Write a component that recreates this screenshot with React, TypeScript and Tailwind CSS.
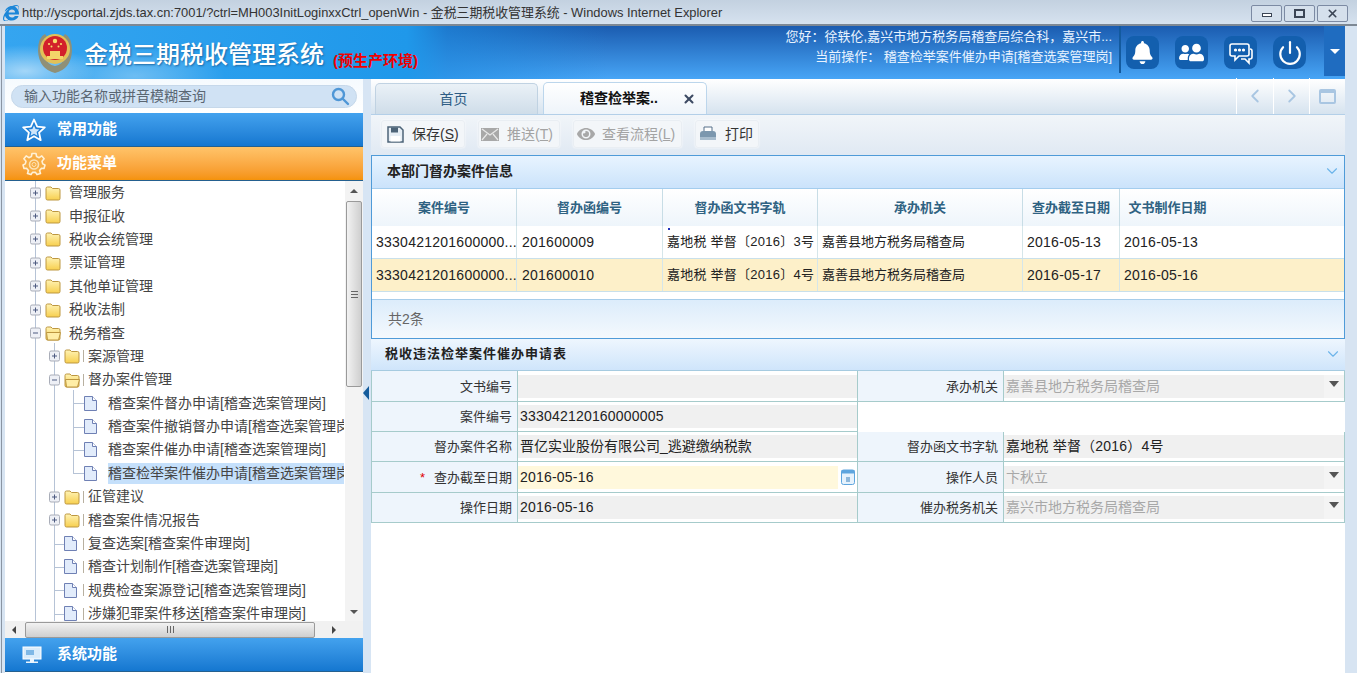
import React from "react";
import { FaBell, FaEye, FaInternetExplorer, FaUserFriends } from "react-icons/fa";
import { ChevronDown, ChevronLeft, ChevronRight, Power, X } from "lucide-react";

type TreeRow = {
  label: string;
  level: number;
  kind: "closed" | "open" | "doc";
  guides: number[];
  elbow?: number;
  halfLine?: number;
  selected?: boolean;
  tick?: boolean;
};

const treeRows: TreeRow[] = [
  { label: "管理服务", level: 0, kind: "closed", guides: [30] },
  { label: "申报征收", level: 0, kind: "closed", guides: [30] },
  { label: "税收会统管理", level: 0, kind: "closed", guides: [30] },
  { label: "票证管理", level: 0, kind: "closed", guides: [30] },
  { label: "其他单证管理", level: 0, kind: "closed", guides: [30] },
  { label: "税收法制", level: 0, kind: "closed", guides: [30] },
  { label: "税务稽查", level: 0, kind: "open", guides: [30] },
  { label: "案源管理", level: 1, kind: "closed", guides: [30, 49], tick: true },
  { label: "督办案件管理", level: 1, kind: "open", guides: [30, 49], tick: true },
  { label: "稽查案件督办申请[稽查选案管理岗]", level: 2, kind: "doc", guides: [30, 49, 68], elbow: 68 },
  { label: "稽查案件撤销督办申请[稽查选案管理岗]", level: 2, kind: "doc", guides: [30, 49, 68], elbow: 68 },
  { label: "稽查案件催办申请[稽查选案管理岗]", level: 2, kind: "doc", guides: [30, 49, 68], elbow: 68 },
  { label: "稽查检举案件催办申请[稽查选案管理岗]", level: 2, kind: "doc", guides: [30, 49], elbow: 68, halfLine: 68, selected: true },
  { label: "征管建议", level: 1, kind: "closed", guides: [30, 49], tick: true },
  { label: "稽查案件情况报告", level: 1, kind: "closed", guides: [30, 49], tick: true },
  { label: "复查选案[稽查案件审理岗]", level: 1, kind: "doc", guides: [30, 49], elbow: 49, tick: true },
  { label: "稽查计划制作[稽查选案管理岗]", level: 1, kind: "doc", guides: [30, 49], elbow: 49, tick: true },
  { label: "规费检查案源登记[稽查选案管理岗]", level: 1, kind: "doc", guides: [30, 49], elbow: 49, tick: true },
  { label: "涉嫌犯罪案件移送[稽查案件审理岗]", level: 1, kind: "doc", guides: [30, 49], elbow: 49, tick: true },
];

const cases = [
  { no: "3330421201600000...", letter: "201600009", doc: "嘉地税 举督〔2016〕3号", org: "嘉善县地方税务局稽查局", end: "2016-05-13", made: "2016-05-13" },
  { no: "3330421201600000...", letter: "201600010", doc: "嘉地税 举督〔2016〕4号", org: "嘉善县地方税务局稽查局", end: "2016-05-17", made: "2016-05-16" },
];

const Folder = ({ open }: { open: boolean }) => (
  <svg width="16" height="16" viewBox="0 0 16 16" className="shrink-0">
    <defs>
      <linearGradient id="folderFill" x1="0" y1="0" x2="0" y2="1">
        <stop offset="0" stopColor="#fff3b5" />
        <stop offset="1" stopColor="#f7cf4e" />
      </linearGradient>
    </defs>
    <path d="M1 3.5 Q1 2 2.5 2 H6 L7.5 3.5 H13.5 Q15 3.5 15 5 V13.5 Q15 15 13.5 15 H2.5 Q1 15 1 13.5 Z" fill="url(#folderFill)" stroke="#bd9740" />
    {open && <path d="M1.5 7.5 H15.5 L13.5 15 H2.5 Z" fill="#ffeea6" stroke="#bd9740" />}
  </svg>
);

const Doc = () => (
  <svg width="13" height="15" viewBox="0 0 13 15" className="shrink-0">
    <path d="M.5.5 H8.5 L12.5 4.5 V14.5 H.5 Z" fill="#e2ecfb" stroke="#6f80b4" />
    <path d="M8.5.5 V4.5 H12.5" fill="#fff" stroke="#6f80b4" />
  </svg>
);

const Gutter = ({ row }: { row: TreeRow }) => {
  const width = row.kind === "doc" ? (row.level === 2 ? 79 : 59) : row.level === 0 ? 40 : 59;
  const boxX = 30 + row.level * 19;
  return (
    <svg width={width} height="24" className="shrink-0 overflow-visible">
      {row.guides.map((x) => (
        <line key={x} x1={x + 0.5} x2={x + 0.5} y1="-1" y2="25" stroke="#b6c3d6" />
      ))}
      {row.halfLine && <line x1={row.halfLine + 0.5} x2={row.halfLine + 0.5} y1="-1" y2="12.5" stroke="#b6c3d6" />}
      {row.elbow && <line x1={row.elbow} x2={row.elbow + 11} y1="12.5" y2="12.5" stroke="#b6c3d6" />}
      {row.kind !== "doc" && (
        <g>
          <rect x={boxX - 4.5} y="7" width="10" height="10" rx="1.5" fill="#eef0f6" stroke="#a9adb8" />
          <line x1={boxX - 2} x2={boxX + 3} y1="12" y2="12" stroke="#4d5a80" />
          {row.kind === "closed" && <line x1={boxX + 0.5} x2={boxX + 0.5} y1="9.5" y2="14.5" stroke="#4d5a80" />}
        </g>
      )}
    </svg>
  );
};

const Tree = ({ row }: { row: TreeRow }) => (
  <div className="flex h-[23.4px] items-center whitespace-nowrap text-[14px] text-[#444]">
    <Gutter row={row} />
    {row.kind === "doc" ? <Doc /> : <Folder open={row.kind === "open"} />}
    {row.level === 0 && <span className="w-[8px] shrink-0" />}
    {row.tick && (
      <span className={`${row.kind === "doc" ? "ml-[6px]" : "ml-[3px]"} mr-[4px] h-[12px] w-px shrink-0 bg-[#b8b0a0]`} />
    )}
    {row.level === 2 && <span className="w-[11px] shrink-0" />}
    <span className={row.selected ? "flex-1 bg-[#c5e0fb]" : ""}>{row.label}</span>
  </div>
);

const Menu = ({ icon, label, orange }: { icon: React.ReactNode; label: string; orange?: boolean }) => (
  <div
    className={`flex h-[34px] shrink-0 items-center border-b border-[#24608f] pl-[17px] text-[15px] font-bold text-white ${
      orange ? "bg-gradient-to-b from-[#ffc469] to-[#f59208]" : "bg-gradient-to-b from-[#43a2ee] to-[#1477d0]"
    }`}
  >
    <span className="flex w-[35px] justify-start">{icon}</span>
    {label}
  </div>
);

const HeaderIcon = ({ children, className }: { children: React.ReactNode; className?: string }) => (
  <div className={`flex h-[33px] w-[33px] items-center justify-center rounded-[8px] bg-[#135fae] text-white ${className ?? ""}`}>
    {children}
  </div>
);

const ToolButton = ({ icon, children, disabled, className }: { icon: React.ReactNode; children: React.ReactNode; disabled?: boolean; className: string }) => (
  <div
    className={`flex h-[28px] items-center rounded-[3px] border border-[#e9eef3] bg-[#f3f6f9] text-[14px] shadow-[0_0_2px_#ffffff] ${
      disabled ? "text-[#a3a3a3]" : "text-[#333]"
    } ${className}`}
  >
    {icon}
    {children}
  </div>
);

const PanelChevron = () => <ChevronDown size={18} strokeWidth={1.5} className="text-[#6cb4ea]" />;

const Grip = ({ vertical }: { vertical?: boolean }) => (
  <span className={`flex ${vertical ? "flex-col" : ""} gap-[2px]`}>
    <span className={`${vertical ? "h-px w-[7px]" : "h-[7px] w-px"} bg-[#666]`} />
    <span className={`${vertical ? "h-px w-[7px]" : "h-[7px] w-px"} bg-[#666]`} />
    <span className={`${vertical ? "h-px w-[7px]" : "h-[7px] w-px"} bg-[#666]`} />
  </span>
);

const Label = ({ children }: { children: React.ReactNode }) => (
  <div className="flex items-center justify-end border-r border-b border-[#a6cbcb] bg-[#eef5fc] pr-[5px] pt-px text-[13px] text-[#333]">
    {children}
  </div>
);

const Field = ({ children }: { children?: React.ReactNode }) => (
  <div className="flex items-center border-r border-b border-[#a6cbcb] bg-white">
    <div className="flex h-[23px] w-full items-center bg-[#f0f0f0] pl-[2px] text-[14px] tracking-[0.2px] text-[#222]">{children}</div>
  </div>
);

const SelectField = ({ children }: { children: React.ReactNode }) => (
  <div className="flex items-center border-r border-b border-[#a6cbcb] bg-white">
    <div className="flex h-[23px] flex-1 items-center bg-[#f0f0f0] pl-[2px] text-[14px] text-[#a8a8a8]">{children}</div>
    <div className="flex h-[23px] w-[20px] items-start justify-center bg-[#f4f4f4] pt-[6px]">
      <span className="h-0 w-0 border-x-[5px] border-t-[6px] border-x-transparent border-t-[#555]" />
    </div>
  </div>
);

export default function App() {
  return (
    <div className="flex h-[673px] w-[1357px] flex-col overflow-hidden bg-[#d7e4f2] font-['Liberation_Sans','Noto_Sans_CJK_SC',sans-serif]">
      {/* ie title bar */}
      <div className="flex h-[26px] shrink-0 items-center border-b-2 border-[#7d8894] bg-gradient-to-b from-[#c3d1e0] to-[#d6e2ef] pl-[3px] pr-[9px] pt-[2px]">
        <FaInternetExplorer size={16} className="mr-[3px] text-[#1b86d8]" />
        <span className="text-[12.9px] text-[#333]">
          http://yscportal.zjds.tax.cn:7001/?ctrl=MH003InitLoginxxCtrl_openWin - 金税三期税收管理系统 - Windows Internet Explorer
        </span>
        <div className="ml-auto flex gap-[2px]">
          <div className="flex h-[17px] w-[31px] items-center justify-center rounded-[2px] border border-[#7c8aa3] bg-[#d5e0ec]">
            <span className="mt-[3px] h-[4px] w-[10px] border border-[#3b4555] bg-white" />
          </div>
          <div className="flex h-[17px] w-[31px] items-center justify-center rounded-[2px] border border-[#7c8aa3] bg-[#d5e0ec]">
            <span className="h-[9px] w-[11px] border-2 border-[#3b4555]" />
          </div>
          <div className="flex h-[17px] w-[31px] items-center justify-center rounded-[2px] border border-[#7c8aa3] bg-[#d5e0ec]">
            <X size={13} strokeWidth={3} className="text-[#3b4555]" />
          </div>
        </div>
      </div>

      <div className="ml-px flex min-h-0 flex-1 flex-col border-l border-[#8a95a3] pl-[3px] pr-[12px]">
        {/* blue system header */}
        <div className="flex h-[53px] shrink-0 items-center bg-[radial-gradient(ellipse_70px_26px_at_20px_45px,rgba(255,255,255,0.55),transparent),radial-gradient(ellipse_90px_30px_at_130px_50px,rgba(255,255,255,0.3),transparent),linear-gradient(90deg,#35a5f0_0%,#1f98ea_30%,rgba(30,140,225,0.6)_33%,transparent_45%),linear-gradient(180deg,#1b5cb0,#47a5f6)]">
          <svg width="36" height="43" viewBox="0 0 36 43" className="ml-[32px] shrink-0">
            <path d="M18 42 Q2 38 1 20 Q1 6 8 3 L12 8 Q5 14 7 24 Q10 34 18 35 Q26 34 29 24 Q31 14 24 8 L28 3 Q35 6 35 20 Q34 38 18 42 Z" fill="#8f9078" />
            <circle cx="18" cy="18" r="15" fill="#e2c159" />
            <circle cx="18" cy="17" r="12" fill="#d3212b" />
            <path d="M10 25 H26 V28 H10 Z M13 20 H23 V25 H13 Z" fill="#f4d469" />
            <circle cx="18" cy="10" r="2.2" fill="#f8dc6c" />
            <circle cx="12" cy="13" r="1.1" fill="#f8dc6c" />
            <circle cx="24" cy="13" r="1.1" fill="#f8dc6c" />
            <circle cx="14.5" cy="15.5" r="1" fill="#f8dc6c" />
            <circle cx="21.5" cy="15.5" r="1" fill="#f8dc6c" />
          </svg>
          <span className="ml-[11px] mt-[5px] whitespace-nowrap text-[24px] font-medium leading-none text-white [text-shadow:1px_1px_2px_#1c6aa8]">金税三期税收管理系统</span>
          <span className="ml-[9px] mt-[15px] whitespace-nowrap text-[15px] font-bold leading-none text-[#f00000]">(预生产环境)</span>
          <div className="ml-auto flex h-[47px] flex-col items-end gap-[3px] self-start border-r-2 border-[#135a9e] pr-[7px] text-[13px] leading-[17px] text-[#e8f3ff]">
            <span className="mt-[2px]">您好：徐轶伦,嘉兴市地方税务局稽查局综合科，嘉兴市...</span>
            <span>当前操作： 稽查检举案件催办申请[稽查选案管理岗]</span>
          </div>
          <div className="ml-[5px] flex items-center gap-[16px]">
            <HeaderIcon><FaBell size={23} /></HeaderIcon>
            <HeaderIcon><FaUserFriends size={25} className="-scale-x-100" /></HeaderIcon>
            <HeaderIcon>
              <svg width="24" height="24" viewBox="0 0 24 24" fill="none" stroke="white" strokeWidth="1.6">
                <path d="M3 3 H18 Q20 3 20 5 V13 Q20 15 18 15 H10 L6 19 V15 H3 Q1 15 1 13 V5 Q1 3 3 3 Z" />
                <path d="M21 8 Q23 8 23 10 V16 Q23 18 21 18 H20 V22 L16 18 H12" />
                <circle cx="6.5" cy="9" r=".8" fill="white" />
                <circle cx="10.5" cy="9" r=".8" fill="white" />
                <circle cx="14.5" cy="9" r=".8" fill="white" />
              </svg>
            </HeaderIcon>
            <HeaderIcon className="!rounded-[10px]"><Power size={26} strokeWidth={2} /></HeaderIcon>
          </div>
          <div className="ml-[18px] flex h-[50px] w-[21px] items-center justify-center self-start bg-[#1f6cc0]">
            <span className="h-0 w-0 border-x-[5px] border-t-[5px] border-x-transparent border-t-white" />
          </div>
        </div>

        <div className="flex min-h-0 flex-1">
          {/* left sidebar */}
          <div className="flex w-[358px] shrink-0 flex-col bg-white">
            <div className="flex h-[34px] shrink-0 items-center bg-gradient-to-b from-[#f5fafe] to-white px-[6px]">
              <div className="flex h-[23px] w-full items-center justify-between rounded-full border border-[#c6d8ea] bg-[#d0e2f4] pl-[12px] pr-[6px] text-[14px] text-[#5a6672]">
                输入功能名称或拼音模糊查询
                <svg width="19" height="19" viewBox="0 0 19 19" fill="none" stroke="#4f97d6" strokeWidth="2.4">
                  <circle cx="7.5" cy="7.5" r="5.5" />
                  <path d="M12 12 L17 17" strokeLinecap="round" />
                </svg>
              </div>
            </div>
            <Menu
              label="常用功能"
              icon={
                <svg width="24" height="24" viewBox="0 0 24 24">
                  <path d="M12 1.5 L15.2 8.6 L22.8 9.4 L17.1 14.6 L18.7 22.2 L12 18.3 L5.3 22.2 L6.9 14.6 L1.2 9.4 L8.8 8.6 Z" fill="#1f7fd6" stroke="#ffffff" strokeWidth="1.8" strokeLinejoin="round" />
                  <path d="M12 7.5 L13.6 11 L17.4 11.4 L14.6 14 L15.4 17.7 L12 15.8 L8.6 17.7 L9.4 14 L6.6 11.4 L10.4 11 Z" fill="#cfe6fa" />
                </svg>
              }
            />
            <Menu
              label="功能菜单"
              orange
              icon={
                <svg width="24" height="24" viewBox="0 0 24 24" fill="none" stroke="#fff1d6" strokeWidth="1.6" strokeLinejoin="round">
                  <path d="M10 1.5 H14 L14.6 4.6 L17.2 5.7 L19.8 3.9 L22.1 6.8 L20 9.2 L20.7 11.9 L23 13 L22 16.5 L19.3 16.4 L17.6 18.6 L18.5 21.5 L15 22.6 L13.5 20.4 H10.5 L9 22.6 L5.5 21.5 L6.4 18.6 L4.7 16.4 L2 16.5 L1 13 L3.3 11.9 L4 9.2 L1.9 6.8 L4.2 3.9 L6.8 5.7 L9.4 4.6 Z" fill="#f7ad45" />
                  <circle cx="12" cy="12.5" r="4.5" stroke="#fde2b5" />
                  <circle cx="12" cy="12.5" r="2" stroke="#fde2b5" strokeWidth="1" />
                </svg>
              }
            />
            <div className="flex h-[440px] shrink-0">
              <div className="min-w-0 flex-1 overflow-hidden border-r border-white">
                {treeRows.map((row) => (
                  <Tree key={row.label} row={row} />
                ))}
              </div>
              <div className="flex w-[18px] shrink-0 flex-col items-center bg-[#f3f3f3]">
                <span className="mt-[8px] h-0 w-0 border-x-[4px] border-b-[4px] border-x-transparent border-b-[#555]" />
                <div className="mt-[8px] flex h-[186px] w-[16px] items-center justify-center rounded-[2px] border border-[#9a9a9a] bg-gradient-to-r from-[#f2f2f2] to-[#cfcfcf]">
                  <Grip vertical />
                </div>
                <span className="mt-auto mb-[7px] h-0 w-0 border-x-[4px] border-t-[4px] border-x-transparent border-t-[#555]" />
              </div>
            </div>
            <div className="flex h-[17px] shrink-0 items-center bg-[#f1f1f1]">
              <span className="ml-[7px] h-0 w-0 border-y-[4px] border-r-[4px] border-y-transparent border-r-[#444]" />
              <div className="ml-[9px] flex h-[16px] w-[290px] items-center justify-center rounded-[2px] border border-[#9a9a9a] bg-gradient-to-b from-[#f2f2f2] to-[#cfcfcf]">
                <Grip />
              </div>
              <span className="ml-[17px] h-0 w-0 border-y-[4px] border-l-[4px] border-y-transparent border-l-[#444]" />
            </div>
            <Menu
              label="系统功能"
              icon={
                <svg width="20" height="18" viewBox="0 0 20 18">
                  <rect x="1" y="1" width="18" height="12" fill="#d9ecfb" stroke="#fff" />
                  <path d="M4 17 H16 V15.5 H12 V13 H8 V15.5 H4 Z" fill="#e9f4fd" />
                  <rect x="4" y="4" width="8" height="5" fill="#7fb8e6" />
                </svg>
              }
            />
          </div>

          {/* collapse handle */}
          <div className="flex w-[8px] shrink-0 flex-col bg-[#d7e5f4] pt-[307px]">
            <span className="h-0 w-0 border-y-[7px] border-r-[6px] border-y-transparent border-r-[#155c9c]" />
          </div>

          {/* right content */}
          <div className="flex min-w-0 flex-1 flex-col bg-white">
            <div className="flex h-[36px] shrink-0 items-end border-b border-[#b3cfe8] bg-gradient-to-b from-white to-[#d6e3ef] pl-[4px]">
              <div className="flex h-[31px] w-[163px] items-center justify-center rounded-t-[5px] border border-b-0 border-[#c0d2e2] bg-gradient-to-b from-[#eaf1f7] to-[#cfdde9] pr-[6px] pt-px text-[14px] text-[#2f5d85]">
                首页
              </div>
              <div className="ml-[5px] flex h-[32px] w-[164px] items-center rounded-t-[5px] border border-b-0 border-[#bcd6ec] bg-gradient-to-b from-white to-[#eef4fa] pl-[36px] text-[14px] font-bold text-[#111]">
                稽查检举案..
                <X size={14} strokeWidth={3.5} className="ml-auto mr-[10px] text-[#3d4a63]" />
              </div>
              <div className="ml-auto flex h-[36px] text-[#a9c6e2]">
                <div className="flex w-[37px] items-center justify-center border-l border-white"><ChevronLeft size={22} /></div>
                <div className="flex w-[36px] items-center justify-center border-l border-white"><ChevronRight size={22} /></div>
                <div className="flex w-[36px] items-center justify-center border-l border-white">
                  <span className="h-[15px] w-[17px] rounded-[2px] border-2 border-t-[4px] border-[#a9c6e2]" />
                </div>
              </div>
            </div>

            <div className="flex h-[40px] shrink-0 items-start gap-[13px] bg-gradient-to-b from-[#f1f5f9] to-[#e0e9f3] pl-[10px] pt-[5px]">
              <ToolButton
                className="w-[84px] pl-[5px]"
                icon={
                  <svg width="17" height="17" viewBox="0 0 17 17" className="mr-[8px]">
                    <path d="M1 1 H13 L16 4 V16 H1 Z" fill="#e6eef5" stroke="#4d6478" strokeWidth="1.5" />
                    <rect x="4" y="1.5" width="7" height="5" fill="#4d6478" />
                    <rect x="3.5" y="10" width="10" height="5.5" fill="#fff" />
                  </svg>
                }
              >
                保存(<span className="underline">S</span>)
              </ToolButton>
              <ToolButton
                disabled
                className="w-[82px] pl-[2px]"
                icon={
                  <svg width="18" height="13" viewBox="0 0 18 13" className="mr-[8px]">
                    <rect width="18" height="13" fill="#a8a8a8" />
                    <path d="M1 1 L9 7 L17 1 M1 12 L6 6 M17 12 L12 6" fill="none" stroke="#e8e8e8" strokeWidth="1.2" />
                  </svg>
                }
              >
                推送(<span className="underline">T</span>)
              </ToolButton>
              <ToolButton
                disabled
                className="w-[109px] pl-[3px]"
                icon={<FaEye size={18} className="mr-[7px] text-[#a8a8a8]" />}
              >
                查看流程(<span className="underline">L</span>)
              </ToolButton>
              <ToolButton
                className="w-[64px] pl-[3px]"
                icon={
                  <svg width="18" height="18" viewBox="0 0 18 18" className="mr-[8px]">
                    <path d="M5 6 V2 H13 V6" fill="#fff" stroke="#56708a" />
                    <path d="M1 9 Q1 6 4 6 H14 Q17 6 17 9 V15 H1 Z" fill="#7b97ae" />
                    <rect x="1" y="12" width="16" height="3" fill="#a7bccd" />
                  </svg>
                }
              >
                打印
              </ToolButton>
            </div>

            {/* supervised case list */}
            <div className="flex h-[184px] shrink-0 flex-col border border-[#4f9bd8]">
              <div className="flex h-[33px] shrink-0 items-center justify-between border-b border-[#a4cdee] bg-gradient-to-b from-[#e8f4ff] to-[#cbe3fb] pb-[2px] pl-[15px] pr-[3px] text-[14px] font-bold text-[#222]">
                本部门督办案件信息
                <PanelChevron />
              </div>
              <div className="grid h-[37px] shrink-0 grid-cols-[145px_146px_155px_205px_97px_95px_1fr] bg-gradient-to-b from-white to-[#eef5fb] text-[13px] font-bold text-[#2f6282]">
                {["案件编号", "督办函编号", "督办函文书字轨", "承办机关", "查办截至日期", "文书制作日期"].map((title, i) => (
                  <div key={title} className={`flex items-center justify-center ${i < 5 ? "border-r border-[#c8dde6]" : ""}`}>
                    {title}
                  </div>
                ))}
              </div>
              {cases.map((item, i) => (
                <div
                  key={item.letter}
                  className={`grid h-[33px] shrink-0 grid-cols-[145px_146px_155px_205px_97px_95px_1fr] border-b border-[#c9e0ea] text-[14px] tracking-[0.25px] text-[#222] ${
                    i === 1 ? "bg-[#fdf0c9]" : "bg-white"
                  }`}
                >
                  <div className="flex items-center border-r border-[#d5e6ea] pl-[4px] whitespace-nowrap">{item.no}</div>
                  <div className="flex items-center border-r border-[#d5e6ea] pl-[5px]">{item.letter}</div>
                  <div className="relative flex items-center border-r border-[#d5e6ea] pl-[4px] whitespace-nowrap text-[13px]">
                    {i === 0 && <span className="absolute left-[5px] top-[2px] h-[2px] w-[2px] bg-[#2233bb]" />}
                    {item.doc}
                  </div>
                  <div className="flex items-center border-r border-[#d5e6ea] pl-[4px] text-[13px] tracking-normal">{item.org}</div>
                  <div className="flex items-center border-r border-[#d5e6ea] pl-[4px]">{item.end}</div>
                  <div className="flex items-center pl-[4px]">{item.made}</div>
                </div>
              ))}
              <div className="mt-[7px] flex flex-1 items-center border-t border-[#a8cdea] bg-gradient-to-b from-[#dcecfb] to-[#f4f9fd] pl-[16px] text-[14px] text-[#666]">
                共2条
              </div>
            </div>

            {/* application form */}
            <div className="flex h-[32px] shrink-0 items-center justify-between border-b border-[#a6cbe0] bg-gradient-to-b from-[#eef6fe] to-[#cfe5fb] pb-[2px] pl-[14px] pr-[3px] text-[13px] font-bold tracking-[1px] text-[#222]">
              税收违法检举案件催办申请表
              <PanelChevron />
            </div>
            <div className="grid shrink-0 grid-cols-[146px_340px_146px_1fr] grid-rows-[31px_30px_30px_31px_30px] border-l border-[#a6cbcb]">
              <Label>文书编号</Label>
              <Field />
              <Label>承办机关</Label>
              <SelectField>嘉善县地方税务局稽查局</SelectField>

              <Label>案件编号</Label>
              <Field>333042120160000005</Field>
              <div className="col-span-2 bg-white" />

              <Label>督办案件名称</Label>
              <Field>
                <span className="tracking-normal">晋亿实业股份有限公司_逃避缴纳税款</span>
              </Field>
              <Label>督办函文书字轨</Label>
              <Field>嘉地税 举督（2016）4号</Field>

              <Label>
                <span className="mr-[9px] text-[#e00000]">*</span>查办截至日期
              </Label>
              <div className="flex items-center border-r border-b border-[#a6cbcb] bg-white">
                <div className="flex h-[23px] w-[320px] items-center bg-[#fff8dc] pl-[2px] text-[14px] tracking-[0.2px] text-[#222]">2016-05-16</div>
                <svg width="14" height="16" viewBox="0 0 14 16" className="ml-[3px]">
                  <rect x=".5" y="1" width="13" height="14.5" rx="2" fill="#e6f2fc" stroke="#5ea5de" />
                  <rect x=".5" y="1" width="13" height="3.5" fill="#5ea5de" />
                  <rect x="5" y="8" width="4" height="5" fill="#8fb8da" />
                </svg>
              </div>
              <Label>操作人员</Label>
              <SelectField>卞秋立</SelectField>

              <Label>操作日期</Label>
              <Field>2016-05-16</Field>
              <Label>催办税务机关</Label>
              <SelectField>嘉兴市地方税务局稽查局</SelectField>
            </div>
          </div>
        </div>
      </div>
    </div>
  );
}
